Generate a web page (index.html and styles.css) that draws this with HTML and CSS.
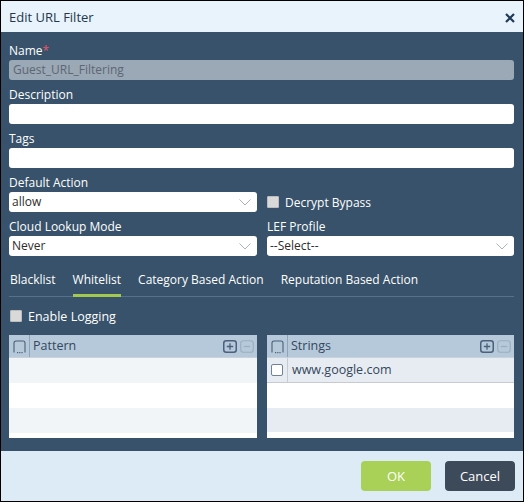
FILE: index.html
```html
<!DOCTYPE html>
<html>
<head>
<meta charset="utf-8">
<link rel="stylesheet" href="styles.css">
</head>
<body>
<div class="dialog">
  <div class="header">
    <span class="title">Edit URL Filter</span>
    <svg class="close" width="10" height="10" viewBox="0 0 10 10"><path d="M1 1L9 9M9 1L1 9" stroke="#1e3a56" stroke-width="2.2" stroke-linecap="butt"/></svg>
  </div>
  <div class="body">
    <div class="field">
      <label class="label">Name<span class="req">*</span></label>
      <div class="input disabled">Guest_URL_Filtering</div>
    </div>
    <div class="field">
      <label class="label">Description</label>
      <div class="input"></div>
    </div>
    <div class="field">
      <label class="label">Tags</label>
      <div class="input"></div>
    </div>
    <div class="two">
      <div class="field">
        <label class="label">Default Action</label>
        <div class="input select">allow<svg class="chev" width="12" height="7" viewBox="0 0 12 7"><path d="M0.5 0.5L6 6L11.5 0.5" fill="none" stroke="#aab4be" stroke-width="1"/></svg></div>
      </div>
      <div class="check-cell">
        <span class="cb grey"></span><span class="cb-text">Decrypt Bypass</span>
      </div>
      <div class="field">
        <label class="label">Cloud Lookup Mode</label>
        <div class="input select">Never<svg class="chev" width="12" height="7" viewBox="0 0 12 7"><path d="M0.5 0.5L6 6L11.5 0.5" fill="none" stroke="#aab4be" stroke-width="1"/></svg></div>
      </div>
      <div class="field">
        <label class="label">LEF Profile</label>
        <div class="input select">--Select--<svg class="chev" width="12" height="7" viewBox="0 0 12 7"><path d="M0.5 0.5L6 6L11.5 0.5" fill="none" stroke="#aab4be" stroke-width="1"/></svg></div>
      </div>
    </div>
    <div class="tabs">
      <span class="tab">Blacklist</span>
      <span class="tab active">Whitelist</span>
      <span class="tab">Category Based Action</span>
      <span class="tab">Reputation Based Action</span>
    </div>
    <div class="logging">
      <span class="cb grey"></span><span class="cb-text">Enable Logging</span>
    </div>
    <div class="tables">
      <div class="grid">
        <div class="ghead">
          <div class="gcheck"><svg width="13" height="14" viewBox="0 0 13 14"><path d="M1 12.5V3a2 2 0 0 1 2-2h7a2 2 0 0 1 2 2v9.5" fill="none" stroke="#4a5f76" stroke-width="1.1"/><rect x="4" y="12" width="1.2" height="1.2" fill="#4a5f76"/><rect x="6.2" y="12" width="1.2" height="1.2" fill="#4a5f76"/><rect x="8.4" y="12" width="1.2" height="1.2" fill="#4a5f76"/></svg></div>
          <div class="gtitle">Pattern</div>
          <div class="gtools">
            <span class="tool plus"><svg width="14" height="13" viewBox="0 0 14 13"><rect x="0.75" y="0.75" width="12.5" height="11.5" rx="2.5" fill="none" stroke="#4b6179" stroke-width="1.5"/><path d="M7 3.3V9.7M3.8 6.5H10.2" stroke="#4b6179" stroke-width="1.3"/></svg></span>
            <span class="tool minus"><svg width="14" height="13" viewBox="0 0 14 13"><rect x="0.75" y="0.75" width="12.5" height="11.5" rx="2.5" fill="none" stroke="#9bafc1" stroke-width="1.2"/><path d="M3.8 6.5H10.2" stroke="#9bafc1" stroke-width="1.3"/></svg></span>
          </div>
        </div>
        <div class="grow alt"></div>
        <div class="grow"></div>
        <div class="grow alt"></div>
      </div>
      <div class="grid">
        <div class="ghead">
          <div class="gcheck"><svg width="13" height="14" viewBox="0 0 13 14"><path d="M1 12.5V3a2 2 0 0 1 2-2h7a2 2 0 0 1 2 2v9.5" fill="none" stroke="#4a5f76" stroke-width="1.1"/><rect x="4" y="12" width="1.2" height="1.2" fill="#4a5f76"/><rect x="6.2" y="12" width="1.2" height="1.2" fill="#4a5f76"/><rect x="8.4" y="12" width="1.2" height="1.2" fill="#4a5f76"/></svg></div>
          <div class="gtitle">Strings</div>
          <div class="gtools">
            <span class="tool plus"><svg width="14" height="13" viewBox="0 0 14 13"><rect x="0.75" y="0.75" width="12.5" height="11.5" rx="2.5" fill="none" stroke="#4b6179" stroke-width="1.5"/><path d="M7 3.3V9.7M3.8 6.5H10.2" stroke="#4b6179" stroke-width="1.3"/></svg></span>
            <span class="tool minus"><svg width="14" height="13" viewBox="0 0 14 13"><rect x="0.75" y="0.75" width="12.5" height="11.5" rx="2.5" fill="none" stroke="#9bafc1" stroke-width="1.2"/><path d="M3.8 6.5H10.2" stroke="#9bafc1" stroke-width="1.3"/></svg></span>
          </div>
        </div>
        <div class="grow data">
          <div class="gcheck"><span class="rowcb"></span></div>
          <div class="gcell">www.google.com</div>
        </div>
        <div class="grow"></div>
        <div class="grow alt2"></div>
      </div>
    </div>
  </div>
  <div class="footer">
    <button class="btn ok">OK</button>
    <button class="btn cancel">Cancel</button>
  </div>
</div>
</body>
</html>
```

FILE: styles.css
```css
* { box-sizing: border-box; }
html, body { margin: 0; padding: 0; }
body {
  font-family: "Open Sans", "DejaVu Sans", sans-serif;
  font-size: 12px;
  background: #ffffff;
}
.dialog {
  width: 524px;
  height: 502px;
  border: 1px solid #000;
  display: flex;
  flex-direction: column;
}
.header {
  height: 31px;
  background: #e9f3fc;
  display: flex;
  align-items: center;
  justify-content: space-between;
  padding: 0 8px 0 8px;
}
.title {
  font-size: 13px;
  color: #23384c;
}
.close { margin-top: 2px; }
.body {
  flex: 1;
  background: #37526a;
  padding: 10px 9px 0 8px;
}
.field { margin-bottom: 6px; }
.label {
  display: block;
  color: #ffffff;
  font-size: 12px;
  line-height: 17px;
  height: 18px;
}
.req { color: #e8566c; }
.input {
  height: 20px;
  background: #ffffff;
  border-radius: 3px;
  font-size: 12px;
  line-height: 20px;
  padding: 0 4px;
  color: #333;
}
.input.disabled {
  background: #9ba8b5;
  color: #5b6773;
}
.select {
  display: flex;
  align-items: center;
  justify-content: space-between;
  padding: 0 6px 0 3px;
  color: #2d2d2d;
}
.chev { margin-top: 1px; }
.two {
  display: grid;
  grid-template-columns: 248px 247px;
  column-gap: 10px;
}
.check-cell {
  display: flex;
  align-items: center;
  height: 20px;
  align-self: start;
  margin-top: 18px;
}
.cb {
  width: 12px;
  height: 12px;
  background: #d9d9d9;
  border: 1px solid #bdbdbd;
  border-radius: 1px;
  display: inline-block;
  flex: none;
}
.cb-text {
  color: #fff;
  font-size: 12px;
  margin-left: 6px;
}
.tabs {
  margin-top: 1px;
  display: flex;
  gap: 17px;
  box-shadow: inset 0 -1px 0 #58718a;
}
.tab {
  color: #fff;
  font-size: 12px;
  line-height: 18px;
  padding: 8px 0 5px 0;
  border-bottom: 3px solid transparent;
}
.tab:first-child { padding-left: 1px; }
.tab.active { border-bottom-color: #a3c94f; }
.logging {
  display: flex;
  align-items: center;
  height: 18px;
  margin-top: 10px;
  padding-left: 1px;
}
.logging .cb-text { margin-left: 6px; font-size: 12.5px; }
.tables {
  margin-top: 10px;
  display: grid;
  grid-template-columns: 248px 247px;
  column-gap: 10px;
}
.grid {
  height: 103px;
  background: #fff;
  overflow: hidden;
}
.ghead {
  height: 23px;
  background: #b5c9da;
  border-bottom: 1px solid #c9d2da;
  display: flex;
  align-items: stretch;
}
.gcheck {
  width: 21px;
  border-right: 1px solid #8fa4b8;
  display: flex;
  align-items: center;
  justify-content: center;
  flex: none;
}
.ghead .gcheck svg { margin-top: 1px; }
.gtitle {
  flex: 1;
  padding-left: 3px;
  font-size: 12.5px;
  line-height: 22px;
  color: #34475c;
}
.gtools {
  display: flex;
  align-items: center;
  gap: 3px;
  padding-right: 3px;
}
.tool { display: flex; }
.grow { height: 25px; }
.grow.alt { background: #f1f5f8; }
.grow.alt2 { background: #e7ecf2; height: 24px; }
.grow.data {
  background: #e7ecf2;
  border-bottom: 1px solid #c6cbd0;
  display: flex;
}
.grow.data .gcheck { border-right: 1px solid #c6cbd0; }
.rowcb {
  width: 12px;
  height: 12px;
  border: 1px solid #6f8296;
  border-radius: 2px;
  background: #fff;
}
.gcell {
  padding-left: 4px;
  line-height: 24px;
  font-size: 12.5px;
  color: #34475c;
}
.footer {
  height: 50px;
  background: #dcebf6;
  display: flex;
  justify-content: flex-end;
  align-items: center;
  gap: 14px;
  padding: 0 8px 0 0;
}
.btn {
  width: 70px;
  height: 30px;
  border: none;
  border-radius: 4px;
  color: #fff;
  font-family: "Open Sans", "DejaVu Sans", sans-serif;
  font-size: 13px;
}
.btn.ok { background: #a9d057; }
.btn.cancel { background: #3d4a5a; }
```
